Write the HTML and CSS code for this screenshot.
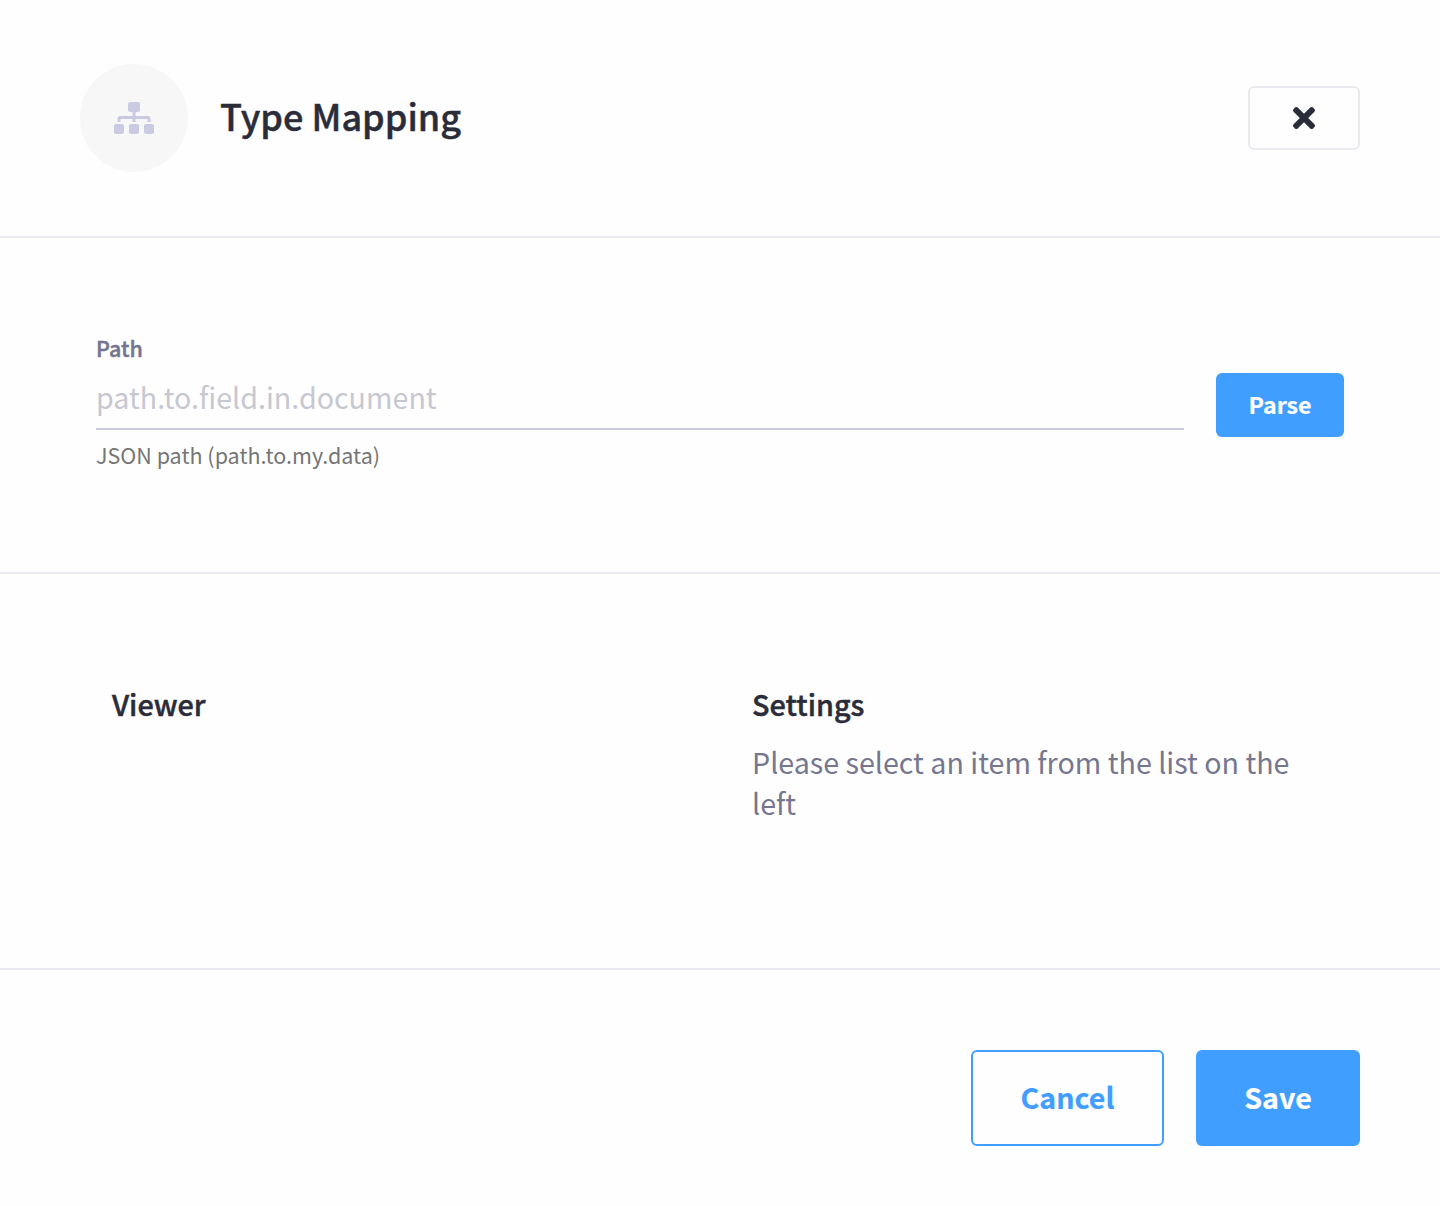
FILE: index.html
```html
<!DOCTYPE html>
<html lang="en">
<head>
<meta charset="utf-8">
<title>Type Mapping</title>
<link rel="stylesheet" href="styles.css">
</head>
<body>
<div class="modal">
  <header class="header">
    <div class="badge">
      <svg class="badge-icon" viewBox="0 0 640 512" aria-hidden="true"><path d="M128 352H32c-17.670 0-32 14.330-32 32v96c0 17.670 14.330 32 32 32h96c17.670 0 32-14.330 32-32v-96c0-17.670-14.330-32-32-32zm-24-80h192v48h48v-48h192v48h48v-57.590c0-21.170-17.230-38.410-38.410-38.410H344v-64h40c17.670 0 32-14.330 32-32V32c0-17.670-14.330-32-32-32H256c-17.670 0-32 14.330-32 32v96c0 17.670 14.330 32 32 32h40v64H94.410C73.230 224 56 241.230 56 262.410V320h48v-48zm264 80h-96c-17.670 0-32 14.330-32 32v96c0 17.670 14.330 32 32 32h96c17.670 0 32-14.330 32-32v-96c0-17.670-14.330-32-32-32zm240 0h-96c-17.670 0-32 14.330-32 32v96c0 17.670 14.330 32 32 32h96c17.670 0 32-14.330 32-32v-96c0-17.670-14.330-32-32-32z"/></svg>
    </div>
    <h1 class="title">Type Mapping</h1>
    <button class="close" aria-label="Close">
      <svg class="close-icon" viewBox="0 0 352 512" aria-hidden="true"><path d="M242.720 256l100.070-100.070c12.280-12.280 12.280-32.190 0-44.480l-22.240-22.240c-12.280-12.280-32.190-12.280-44.480 0L176 189.280 75.930 89.210c-12.280-12.280-32.190-12.280-44.480 0L9.210 111.450c-12.280 12.280-12.280 32.190 0 44.480L109.280 256 9.210 356.070c-12.280 12.280-12.280 32.190 0 44.480l22.240 22.240c12.280 12.280 32.200 12.280 44.480 0L176 322.720l100.070 100.070c12.280 12.280 32.200 12.280 44.480 0l22.240-22.240c12.280-12.280 12.280-32.190 0-44.480L242.720 256z"/></svg>
    </button>
  </header>
  <section class="path-section">
    <div class="field">
      <label class="label" for="path">Path</label>
      <input class="input" id="path" type="text" placeholder="path.to.field.in.document">
      <p class="hint">JSON path (path.to.my.data)</p>
    </div>
    <button class="parse">Parse</button>
  </section>
  <section class="columns">
    <div class="column"><h2 class="subtitle">Viewer</h2></div>
    <div class="column">
      <h2 class="subtitle">Settings</h2>
      <p class="message">Please select an item from the list on the left</p>
    </div>
  </section>
  <footer class="footer">
    <button class="action cancel">Cancel</button>
    <button class="action save">Save</button>
  </footer>
</div>
</body>
</html>
```
FILE: styles.css
```css
* { box-sizing: border-box; margin: 0; }
body {
  background: #fefefe;
  color: #2b2c39;
  font-family: "Noto Sans CJK SC", "Source Sans Pro", sans-serif;
}
button, input { font-family: inherit; padding: 0; border: 0; }
.modal { height: 1206px; display: flex; flex-direction: column; }
.header {
  height: 238px;
  flex: none;
  display: flex;
  align-items: center;
  padding: 0 80px;
  border-bottom: 2px solid #e9e9f0;
}
.badge {
  width: 108px;
  height: 108px;
  border-radius: 50%;
  background: #f7f7f7;
  display: flex;
  align-items: center;
  justify-content: center;
  margin-right: 32px;
}
.badge-icon { width: 40px; height: 32px; fill: #cacae2; }
.title {
  padding-bottom: 6px;
  font-size: 36px;
  line-height: 48px;
  font-weight: 500;
  -webkit-text-stroke: 0.45px currentColor;
}
.close {
  width: 112px;
  height: 64px;
  margin-left: auto;
  border: 2px solid #e9e9f0;
  border-radius: 6px;
  background: #fefefe;
  display: flex;
  align-items: center;
  justify-content: center;
}
.close-icon { width: 22px; height: 32px; fill: #2b2c39; }
.path-section {
  height: 336px;
  flex: none;
  display: flex;
  align-items: flex-start;
  gap: 32px;
  padding: 96px 96px 0;
  border-bottom: 2px solid #e9e9f0;
}
.field { flex: 1; display: flex; flex-direction: column; }
.label {
  font-size: 21.5px;
  line-height: 28px;
  font-weight: 500;
  color: #73748f;
  -webkit-text-stroke: 0.4px currentColor;
}
.input {
  width: 100%;
  height: 68px;
  padding-top: 2px;
  font-size: 28.65px;
  background: transparent;
  border-bottom: 2px solid #cacae2;
}
.input::placeholder { color: #c7c7d1; opacity: 1; }
.hint { margin-top: 11px; font-size: 21.5px; line-height: 28px; color: #757575; }
.parse {
  width: 128px;
  height: 64px;
  margin-top: 39px;
  padding-bottom: 2px;
  border-radius: 6px;
  background: #3f9eff;
  color: #fff;
  font-size: 23.2px;
  font-weight: 700;
  -webkit-text-stroke: 0.2px currentColor;
}
.columns {
  height: 396px;
  flex: none;
  display: grid;
  grid-template-columns: 1fr 1fr;
  padding: 110px 80px 0;
  border-bottom: 2px solid #e9e9f0;
}
.column { padding: 0 32px; }
.subtitle {
  font-size: 28.8px;
  line-height: 40px;
  font-weight: 500;
  -webkit-text-stroke: 0.45px currentColor;
}
.message { margin-top: 17px; font-size: 28.65px; line-height: 41px; color: #76778f; }
.footer { display: flex; justify-content: flex-end; gap: 32px; padding: 80px 80px 0; }
.action {
  height: 96px;
  padding-bottom: 4px;
  border-radius: 6px;
  font-size: 28.6px;
  font-weight: 700;
  -webkit-text-stroke: 0.2px currentColor;
}
.cancel { width: 193px; border: 2px solid #3f9eff; background: #fefefe; color: #3f9eff; }
.save { width: 164px; background: #3f9eff; color: #fff; }
```
